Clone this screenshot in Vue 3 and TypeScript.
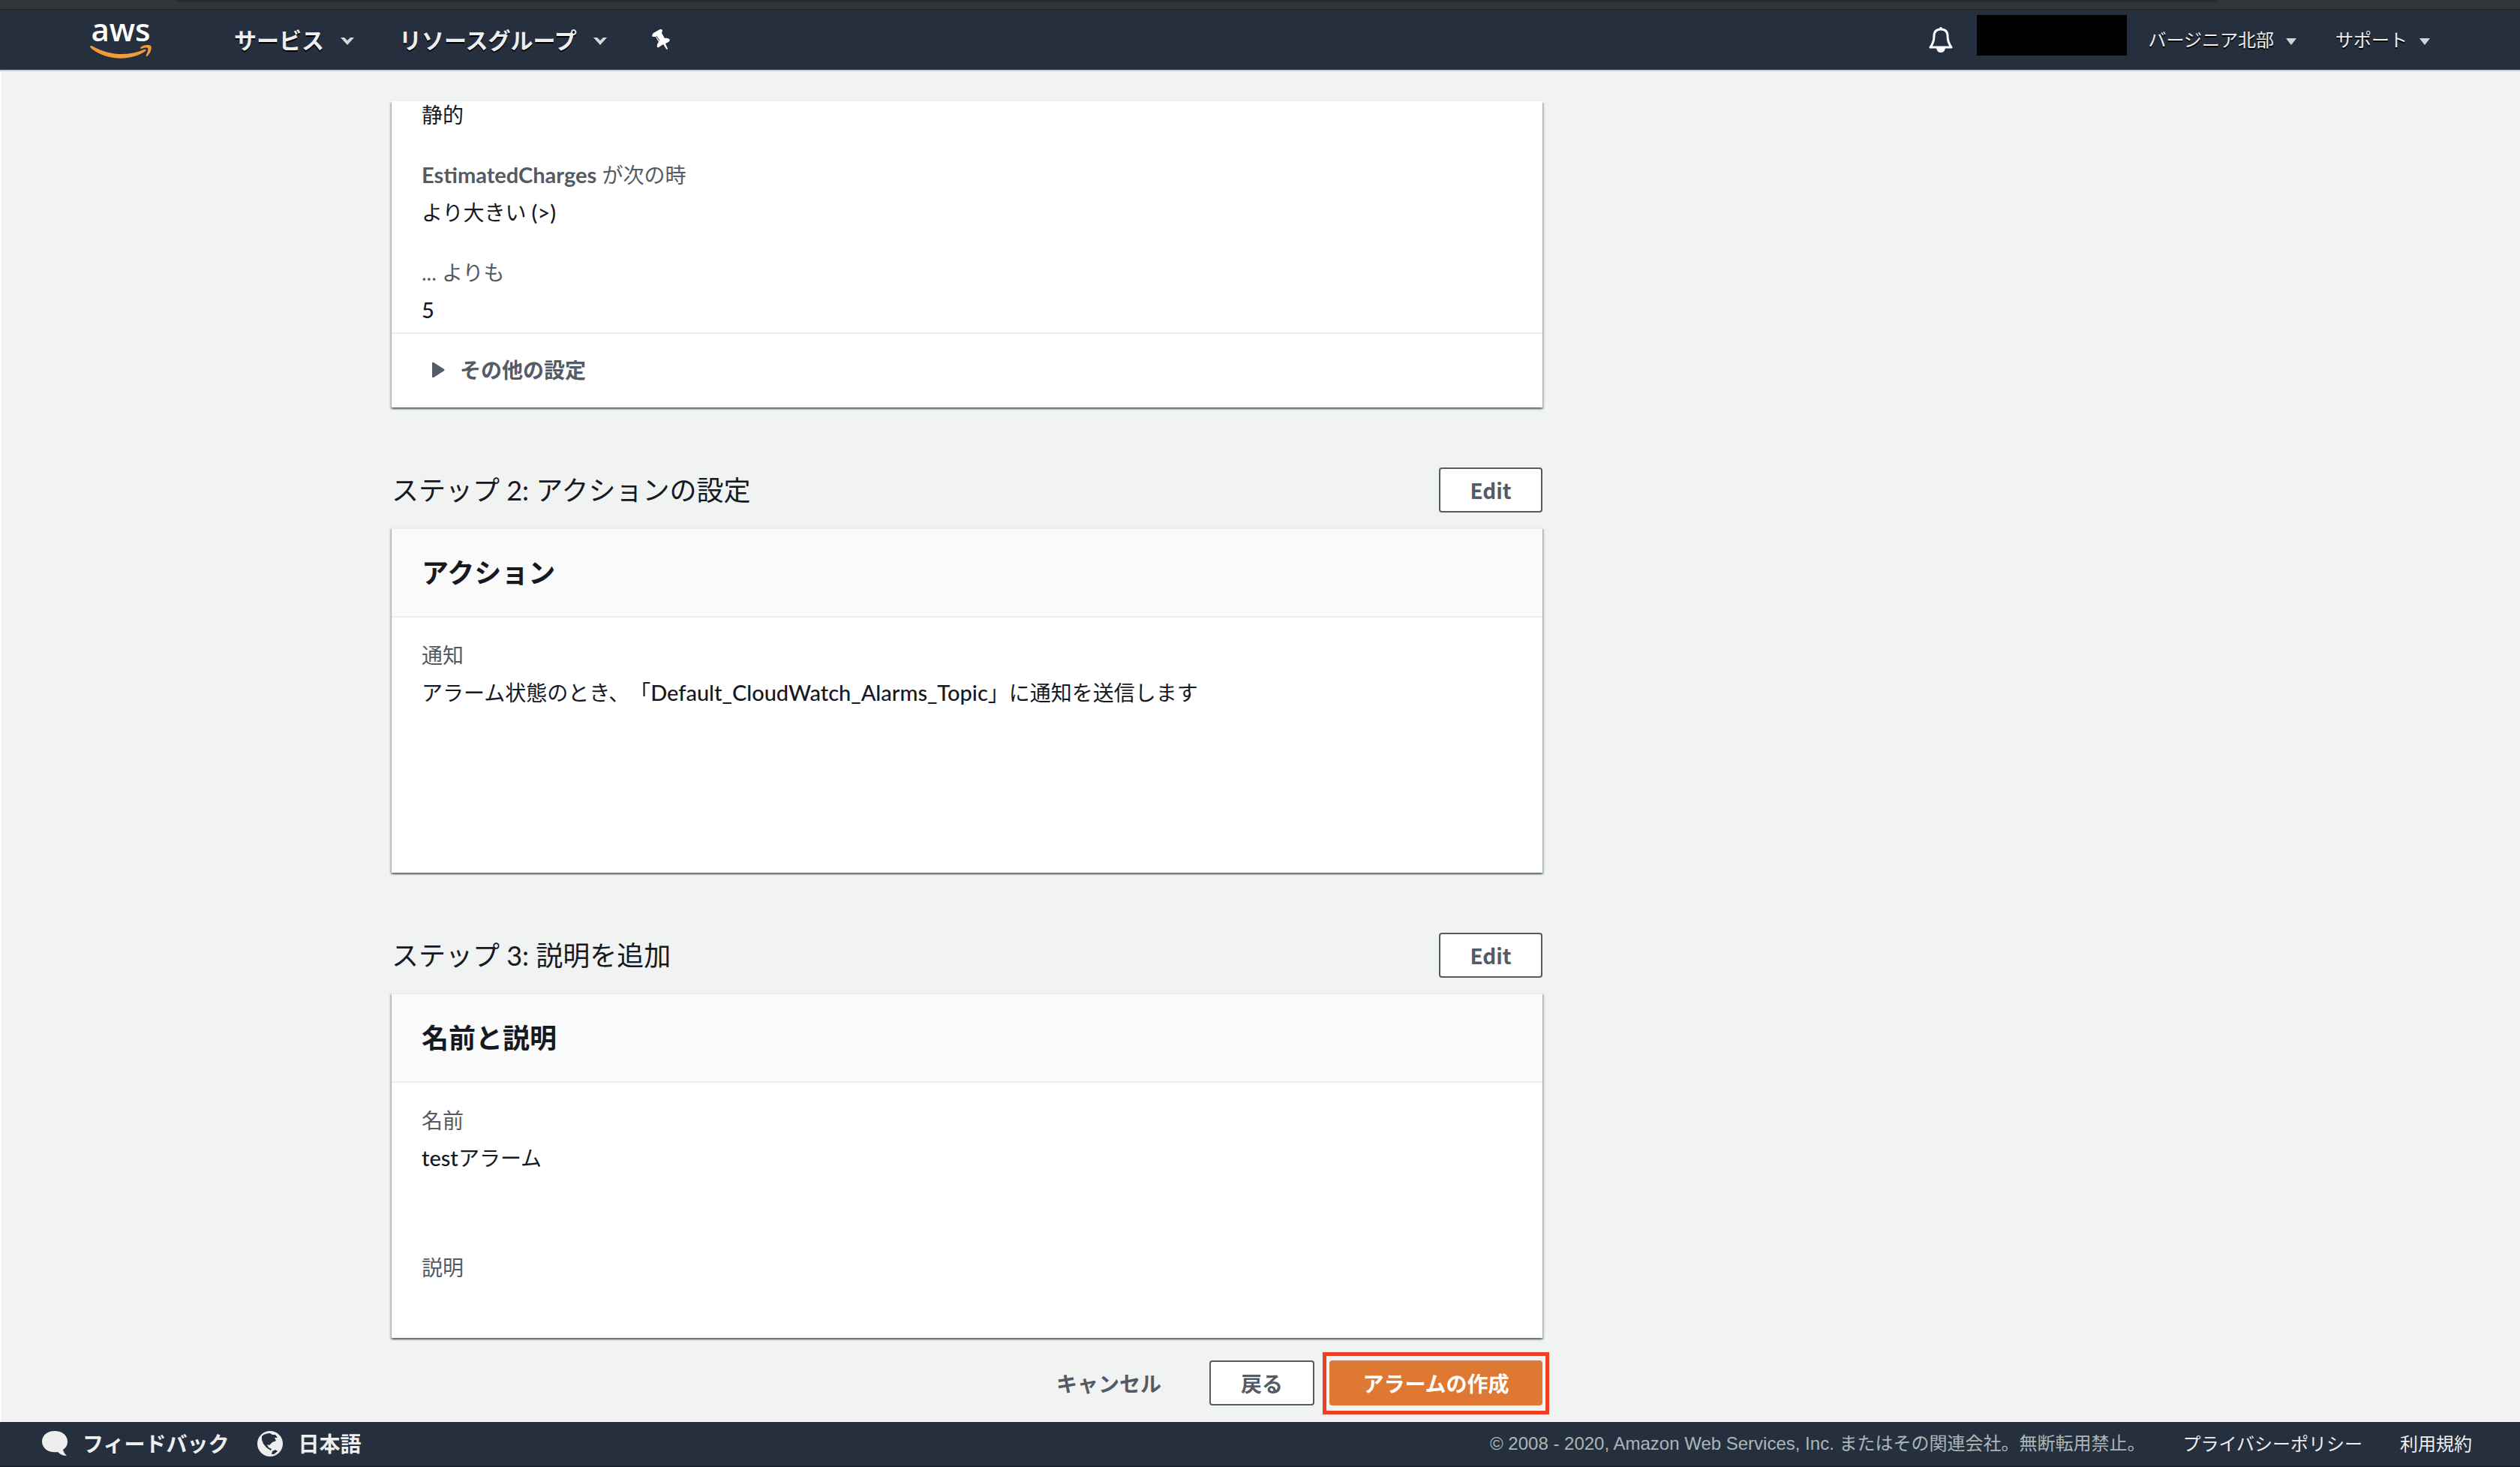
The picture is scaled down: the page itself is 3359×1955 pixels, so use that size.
<script setup lang="ts">
interface Entry {
  strong?: string
  label: string
  value: string
}

interface Step {
  id: string
  heading: string
  title: string
  entries: Entry[]
}

interface Run {
  text: string
  latin: boolean
}

const conditions: Entry[] = [
  { strong: 'EstimatedCharges', label: 'が次の時', value: 'より大きい (>)' },
  { label: '... よりも', value: '5' },
]

const steps: Step[] = [
  {
    id: 'actions',
    heading: 'ステップ 2: アクションの設定',
    title: 'アクション',
    entries: [
      {
        label: '通知',
        value: 'アラーム状態のとき、「Default_CloudWatch_Alarms_Topic」に通知を送信します',
      },
    ],
  },
  {
    id: 'description',
    heading: 'ステップ 3: 説明を追加',
    title: '名前と説明',
    entries: [
      { label: '名前', value: 'testアラーム' },
      { label: '説明', value: '' },
    ],
  },
]

// Splits mixed text so that Latin runs can be set slightly larger than kana and kanji.
function runs(text: string): Run[] {
  const parts = text.match(/[!-~]+|[^!-~]+/g) ?? []
  return parts.map((part) => ({ text: part, latin: /^[!-~]/.test(part) }))
}
</script>

<template>
  <div class="page">
    <div class="browser-edge"><div class="address-edge"></div></div>

    <header class="topbar">
      <a class="logo" href="#" aria-label="aws">
        <span class="logo-text">aws</span>
        <svg class="logo-smile" viewBox="0 0 82 20" aria-hidden="true">
          <path d="M0 3Q1 1 4 3C24 14 49 17 72 7Q76 6 74 9C54 23 21 22 1 5Z" />
          <path d="M67 5C69 1 78 0 81 2C83 6 80 13 76 16Q74 17 75 14C77 10 78 7 77 5C75 4 71 5 68 6Z" />
        </svg>
      </a>
      <nav class="menu">
        <button type="button" class="menu-item">
          サービス
          <svg class="chevron" viewBox="0 0 18 10" aria-hidden="true"><path d="M0 0H5L9 4L13 0H18L9 10Z" /></svg>
        </button>
        <button type="button" class="menu-item">
          リソースグループ
          <svg class="chevron" viewBox="0 0 18 10" aria-hidden="true"><path d="M0 0H5L9 4L13 0H18L9 10Z" /></svg>
        </button>
        <button type="button" class="icon-button" aria-label="ピン">
          <svg class="pin" viewBox="0 0 24 28" aria-hidden="true">
            <path d="M9 1Q12 -1 14 1Q14 3 13 5L17 12Q20 11 23 13Q25 15 22 17L18 19L21 26Q21 28 19 26L15 20L9 24Q6 25 7 21Q7 19 9 17L5 10Q3 10 1 10Q-1 8 2 5Z" />
            <path class="pin-slot" d="M6 9L10 15" />
          </svg>
        </button>
      </nav>
      <div class="account">
        <button type="button" class="icon-button" aria-label="通知">
          <svg class="bell" viewBox="0 0 32 34" aria-hidden="true">
            <path class="bell-body" d="M16 3C9 3 7 7 7 12C7 19 5 23 2 27H30C27 23 25 19 25 12C25 7 23 3 16 3Z" />
            <path class="bell-fill" d="M14 3Q14 0 16 0Q18 0 18 3ZM10 28H22Q21 34 16 34Q11 34 10 28Z" />
          </svg>
        </button>
        <div class="redacted"></div>
        <button type="button" class="menu-item small">
          バージニア北部
          <svg class="caret" viewBox="0 0 14 9" aria-hidden="true"><path d="M0 0H14L7 9Z" /></svg>
        </button>
        <button type="button" class="menu-item small">
          サポート
          <svg class="caret" viewBox="0 0 14 9" aria-hidden="true"><path d="M0 0H14L7 9Z" /></svg>
        </button>
      </div>
    </header>

    <main class="content">
      <div class="column">
        <section class="card">
          <div class="conditions">
            <p class="value">静的</p>
            <dl class="entries">
              <div v-for="entry in conditions" :key="entry.label" class="entry">
                <dt><template v-if="entry.strong"><strong class="latin">{{ entry.strong }}</strong>&nbsp;</template>{{ entry.label }}</dt>
                <dd><span v-for="(run, i) in runs(entry.value)" :key="i" :class="{ latin: run.latin }">{{ run.text }}</span></dd>
              </div>
            </dl>
          </div>
          <details class="more">
            <summary>
              <svg class="triangle" viewBox="0 0 17 22" aria-hidden="true"><path d="M0 2Q0 0 2 1L16 10Q17 11 16 12L2 21Q0 22 0 20Z" /></svg>
              その他の設定
            </summary>
          </details>
        </section>

        <template v-for="step in steps" :key="step.id">
          <div class="step-head">
            <h2>{{ step.heading }}</h2>
            <button type="button" class="btn">Edit</button>
          </div>
          <section class="card bordered">
            <h3>{{ step.title }}</h3>
            <dl class="entries body">
              <div v-for="entry in step.entries" :key="entry.label" class="entry">
                <dt>{{ entry.label }}</dt>
                <dd><span v-for="(run, i) in runs(entry.value)" :key="i" :class="{ latin: run.latin }">{{ run.text }}</span></dd>
              </div>
            </dl>
          </section>
        </template>

        <div class="actions">
          <button type="button" class="btn link">キャンセル</button>
          <button type="button" class="btn back">戻る</button>
          <div class="highlight">
            <button type="submit" class="btn primary">アラームの作成</button>
          </div>
        </div>
      </div>
    </main>

    <footer class="footer">
      <a class="foot-link" href="#">
        <svg class="bubble" viewBox="0 0 34 34" aria-hidden="true">
          <path d="M17 0C27 0 34 6 34 14C34 19 32 22 28 25C29 29 31 31 33 33C28 33 24 31 21 28C9 30 0 23 0 14C0 6 7 0 17 0Z" />
        </svg>
        フィードバック
      </a>
      <a class="foot-link" href="#">
        <svg class="globe" viewBox="0 0 34 34" aria-hidden="true">
          <circle cx="17" cy="17" r="17" />
          <path class="land" d="M6 7C9 4 13 3 17 3L20 5L24 5L27 9L23 9L25 13L20 15L16 19L13 18L15 22L19 24L18 26L12 22L8 17L6 12ZM20 27L24 25L27 27L22 31L19 31Z" />
        </svg>
        日本語
      </a>
      <p class="legal">© 2008 - 2020, Amazon Web Services, Inc. またはその関連会社。無断転用禁止。</p>
      <a class="foot-small" href="#">プライバシーポリシー</a>
      <a class="foot-small" href="#">利用規約</a>
    </footer>
  </div>
</template>

<style>
body {
  margin: 0;
}
</style>

<style scoped>
.page {
  display: flex;
  flex-direction: column;
  min-height: 100vh;
  background: #f1f3f3;
  color: #16191f;
  font-family: Lato, "Noto Sans CJK JP", sans-serif;
  font-size: 28px;
  line-height: 44px;
  text-spacing-trim: space-all;
}

button {
  font: inherit;
  color: inherit;
  margin: 0;
  cursor: pointer;
}

a {
  color: inherit;
  text-decoration: none;
}

h2,
h3,
p,
dl,
dd {
  margin: 0;
}

svg {
  display: block;
  flex: none;
  fill: currentColor;
}

.browser-edge {
  box-sizing: border-box;
  height: 13px;
  padding: 0 12% 0 7%;
  background: #323638;
  border-bottom: 1px solid #24261f;
}

.address-edge {
  height: 3px;
  background: #272b2d;
  border-radius: 0 0 8px 8px;
}

.topbar {
  display: flex;
  align-items: center;
  box-sizing: border-box;
  height: 82px;
  padding: 0 120px;
  background: #262f3e;
  border-bottom: 2px solid #c8cbcd;
  color: #eee;
}

.logo {
  display: flex;
  flex-direction: column;
  align-items: center;
  gap: 4px;
  width: 82px;
  margin: 0 110px 4px 0;
  color: #fff;
}

.logo-text {
  font-family: "Open Sans", sans-serif;
  font-size: 42px;
  font-weight: 600;
  line-height: 32px;
}

.logo-smile {
  width: 82px;
  height: 20px;
  fill: #f19c38;
}

.menu,
.account {
  display: flex;
  align-items: center;
}

.menu {
  gap: 60px;
}

.account {
  margin-left: auto;
}

.menu-item {
  display: flex;
  align-items: center;
  gap: 22px;
  padding: 0;
  border: 0;
  background: none;
  font-size: 30px;
  font-weight: 700;
  text-shadow: 0 2px 0 #000;
}

.menu-item.small {
  gap: 16px;
  font-size: 24px;
  font-weight: 400;
}

.menu-item.small + .menu-item.small {
  margin-left: 52px;
}

.chevron,
.caret {
  margin-top: 4px;
  fill: #d5d5d5;
}

.chevron {
  width: 18px;
  height: 10px;
}

.caret {
  width: 14px;
  height: 9px;
}

.icon-button {
  padding: 0;
  border: 0;
  background: none;
  color: #fff;
}

.pin {
  width: 24px;
  height: 28px;
}

.pin-slot {
  stroke: #262f3e;
  stroke-width: 1;
}

.bell {
  width: 32px;
  height: 34px;
}

.bell-body {
  fill: none;
  stroke: #fff;
  stroke-width: 3;
  stroke-linejoin: round;
}

.redacted {
  width: 200px;
  height: 54px;
  margin: 0 28px 12px 32px;
  background: #000;
}

.content {
  flex: 1;
  padding: 40px 40px 22px 520px;
  border-left: 2px solid #fff;
}

.column {
  max-width: 1534px;
}

.card {
  background: #fff;
  box-shadow:
    0 2px 2px rgba(0, 28, 36, 0.45),
    2px 2px 2px rgba(0, 28, 36, 0.2),
    -2px 2px 2px rgba(0, 28, 36, 0.2);
}

.card.bordered {
  border-top: 2px solid #eaeded;
}

.conditions {
  display: flow-root;
  padding: 0 40px 8px;
}

.conditions .value {
  margin: -4px 0 36px;
}

.entries {
  display: flex;
  flex-direction: column;
  gap: 36px;
}

.entries.body {
  box-sizing: border-box;
  min-height: 340px;
  padding: 28px 40px 20px;
  gap: 102px;
}

.entry {
  display: flex;
  flex-direction: column;
  gap: 6px;
}

dt,
dd {
  height: 44px;
}

dt {
  color: #545b64;
}

.latin {
  font-size: 29px;
}

dd .latin {
  font-weight: 500;
}

.more {
  border-top: 2px solid #eaeded;
}

.more summary {
  display: flex;
  align-items: center;
  gap: 20px;
  padding: 26px 54px 28px;
  color: #545b64;
  font-weight: 700;
  list-style: none;
  cursor: pointer;
}

.triangle {
  width: 17px;
  height: 22px;
}

.step-head {
  display: flex;
  align-items: center;
  justify-content: space-between;
  margin: 80px 0 20px;
}

h2 {
  font-size: 36px;
  font-weight: 400;
}

h3 {
  padding: 36px 40px;
  background: #fafafa;
  border-bottom: 2px solid #eaeded;
  font-size: 36px;
  font-weight: 700;
}

.btn {
  box-sizing: border-box;
  min-width: 138px;
  height: 60px;
  padding: 0 38px;
  border: 2px solid #545b64;
  border-radius: 4px;
  background: #fff;
  color: #545b64;
  font-family: "Noto Sans CJK JP", sans-serif;
  font-weight: 700;
}

.btn.link {
  min-width: 228px;
  border-color: transparent;
  background: none;
}

.btn.back {
  min-width: 140px;
}

.btn.primary {
  min-width: 284px;
  border-color: #df7832;
  background: #df7832;
  color: #fff;
}

.actions {
  display: flex;
  justify-content: flex-end;
  gap: 20px;
  margin-top: 30px;
}

.highlight {
  position: relative;
}

.highlight::after {
  content: "";
  position: absolute;
  inset: -11px -9px -12px;
  border: 5px solid #ec4024;
  pointer-events: none;
}

.footer {
  display: flex;
  align-items: center;
  box-sizing: border-box;
  height: 60px;
  padding: 0 64px 0 56px;
  background: #262f3e;
  border-bottom: 2px solid #1b2331;
  color: #eee;
}

.foot-link {
  display: flex;
  align-items: center;
  gap: 20px;
  margin-right: 38px;
  font-weight: 700;
}

.bubble,
.globe {
  width: 34px;
  height: 34px;
}

.land {
  fill: #262f3e;
}

.legal {
  margin-left: auto;
  color: #aab7b8;
  font-family: "Liberation Sans", "Noto Sans CJK JP", sans-serif;
  font-size: 24px;
}

.foot-small {
  margin-left: 50px;
  font-size: 24px;
}
</style>
